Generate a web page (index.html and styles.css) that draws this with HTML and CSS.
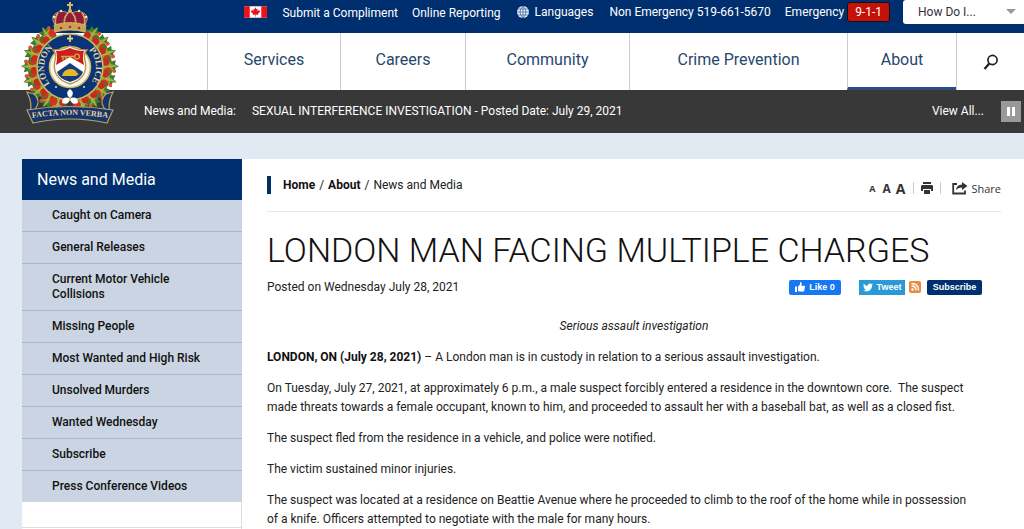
FILE: index.html
```html
<!DOCTYPE html>
<html lang="en">
<head>
<meta charset="utf-8">
<title>London Man Facing Multiple Charges</title>
<link rel="stylesheet" href="styles.css">
</head>
<body>
<header class="site-header">
  <a class="crest" href="#" aria-label="London Police home">
    <svg viewBox="0 0 110 130" width="110" height="130">
      <defs>
        <g id="leaf">
          <path d="M0-49 2-45 6-46 5-42 10-40 7-36 7-31H-7V-36L-10-39-5-42-6-46-2-45Z" fill="#3d7a34"/>
          <path d="M0-48 1-42 5-44 3-39 7-38 2-34H-2L-4-38-2-42Z" fill="#93a83c"/>
          <path d="M0-47V-33M0-39 5-42M0-37-5-41" stroke="#d2b350" stroke-width=".6" fill="none"/>
          <circle cx="5" cy="-38" r="3.800" fill="#d8321e"/>
          <circle cx="-4" cy="-36" r="3.400" fill="#c92a1a"/>
          <circle cx="5" cy="-44" r="1.800" fill="#e5502a"/>
        </g>
        <path id="arc-left" d="M38.500 87.500A26 26 0 0 1 42 45"/>
        <path id="arc-right" d="M68 45A26 26 0 0 1 71.500 87.500"/>
        <path id="arc-motto" d="M17 118Q55 112 93 118"/>
      </defs>
      <g transform="translate(55 67)">
        <use href="#leaf" transform="rotate(-146)"/><use href="#leaf" transform="rotate(-127)"/>
        <use href="#leaf" transform="rotate(-108)"/><use href="#leaf" transform="rotate(-89)"/>
        <use href="#leaf" transform="rotate(-70)"/><use href="#leaf" transform="rotate(-52)"/>
        <use href="#leaf" transform="rotate(-35)"/><use href="#leaf" transform="rotate(35)"/>
        <use href="#leaf" transform="rotate(52)"/><use href="#leaf" transform="rotate(70)"/>
        <use href="#leaf" transform="rotate(89)"/><use href="#leaf" transform="rotate(108)"/>
        <use href="#leaf" transform="rotate(127)"/><use href="#leaf" transform="rotate(146)"/>
        <use href="#leaf" transform="rotate(162)"/><use href="#leaf" transform="rotate(-162)"/>
      </g>
      <circle cx="55" cy="67" r="33" fill="#0b3478" stroke="#d3b660" stroke-width="1.600"/>
      <circle cx="55" cy="67" r="20.500" fill="#f7f5ef" stroke="#d3b660" stroke-width="1.600"/>
      <path d="M55 35v7M52 38.500h6" stroke="#e4cd7e" stroke-width="1.800"/>
      <circle cx="41" cy="87" r="1" fill="#f0e0a0"/><circle cx="69" cy="87" r="1" fill="#f0e0a0"/>
      <g class="crest-name">
        <text><textPath href="#arc-left" startOffset="50%">LONDON</textPath></text>
        <text><textPath href="#arc-right" startOffset="50%">POLICE</textPath></text>
      </g>
      <path d="M38 50Q48 50 55 46Q62 50 72 50Q68 54 70 60Q74 78 55 84Q36 78 40 60Q42 54 38 50Z" fill="#fff" stroke="#b99545" stroke-width="1.400"/>
      <path d="M41 51Q49 51 55 48Q61 51 69 51Q67 57 69 65L55 57 41 65Q43 57 41 51Z" fill="#c8201d"/>
      <path d="M46 56.500H60M48 57v3M51 57v2" stroke="#d9a33d" stroke-width="1.400"/><circle cx="62" cy="56.500" r="2.400" fill="none" stroke="#d9a33d" stroke-width="1.300"/>
      <path d="M42 72 55 63 68 72Q66 79 55 82Q44 79 42 72Z" fill="#173c7e"/>
      <path d="M47 76Q48 70 55 69Q61 69 62 73L64 74 61 76Z" fill="#e6ba27"/>
      <g stroke="#e0c878" stroke-width=".7">
        <path d="M41 26Q35 18 40 14Q46 9 53 13L55 9 57 13Q64 9 70 14Q75 18 69 26Z" fill="#8f1d36"/>
        <path d="M41 26Q39 18 43 13M69 26Q71 18 67 13M50 26Q48 18 53 13M60 26Q62 18 57 13" fill="none" stroke="#e7d18b" stroke-width="1.800" stroke-dasharray="1.5 .6"/>
        <path d="M39 25Q55 20 71 25L70 32Q55 28 40 32Z" fill="#c9a351"/>
        <path d="M55 2v8M52 5h6" stroke="#d8b95b" stroke-width="2"/>
      </g>
      <circle cx="55" cy="11" r="2" fill="#d8b95b"/>
      <g fill="#bd2632"><circle cx="46" cy="28" r="1.300"/><circle cx="55" cy="27" r="1.300"/><circle cx="64" cy="28" r="1.300"/></g>
      <g fill="#f2e5bd"><circle cx="39" cy="17" r="1.300"/><circle cx="46" cy="11" r="1.200"/><circle cx="64" cy="11" r="1.200"/><circle cx="71" cy="17" r="1.300"/></g>
      <g stroke="#bda65e" stroke-width="1.200" fill="#15356f">
        <path d="M12 92 19 94Q26 100 21 108L15 113Q18 104 12 92Z"/>
        <path d="M98 92 91 94Q84 100 89 108L95 113Q92 104 98 92Z"/>
        <path d="M12 110Q55 103 98 110L92 123Q55 115 18 123Z"/>
      </g>
      <path d="M55 98Q49 93 55 89Q61 93 55 98Q63 96 63 103Q56 106 55 98Q54 106 47 103Q47 96 55 98Z" fill="#fff"/>
      <circle cx="55" cy="98" r="1.200" fill="#d9bd4c"/>
      <text class="crest-motto"><textPath href="#arc-motto" startOffset="50%">FACTA NON VERBA</textPath></text>
    </svg>
  </a>
  <div class="topbar">
    <svg class="flag" viewBox="0 0 24 12" width="23" height="12" role="img" aria-label="Canada">
      <path fill="#fff" d="M0 0h24v12H0z"/><path fill="#e8131d" d="M0 0h6v12H0zM18 0h6v12h-6z"/>
      <path fill="#e8131d" d="M12 1 13 3 14.200 2.500 13.900 5 15.500 4 16.500 5 17 5.500 14.500 8 14.700 9 12.300 8.700V11H11.700V8.700L9.300 9 9.500 8 7 5.500 7.500 5 8.500 4 10.100 5 9.800 2.500 11 3Z"/>
    </svg>
    <a class="compliment" href="#">Submit a Compliment</a>
    <a class="reporting" href="#">Online Reporting</a>
    <a class="languages" href="#">
      <svg viewBox="0 0 12 12" width="12" height="12"><circle cx="6" cy="6" r="6" fill="#e8eef8"/><path d="M6 0v12M0 6h12M1 3h10M1 9h10M6 0Q0 6 6 12M6 0q6 6 0 12" stroke="#37609c" stroke-width=".7" fill="none"/></svg>
      Languages</a>
    <span class="non-emergency">Non Emergency 519-661-5670</span>
    <span class="emergency">Emergency <a class="dial" href="#">9-1-1</a></span>
    <div class="how">
      <select aria-label="How Do I"><option>How Do I...</option></select>
    </div>
  </div>
  <nav class="main-nav" aria-label="Main">
    <a href="#">Services</a>
    <a href="#">Careers</a>
    <a href="#">Community</a>
    <a href="#">Crime Prevention</a>
    <a class="current" href="#">About</a>
    <button class="search" type="button" aria-label="Search">
      <svg viewBox="0 0 16 16" width="16" height="16" fill="none" stroke="#222"><circle cx="9.500" cy="6" r="4.600" stroke-width="1.700"/><path d="M6.300 9.500 1.500 15" stroke-width="2.300"/></svg>
    </button>
  </nav>
  <div class="ticker">
    <span class="ticker-label">News and Media:</span>
    <a href="#">SEXUAL INTERFERENCE INVESTIGATION - Posted Date: July 29, 2021</a>
    <a class="view-all" href="#">View All...</a>
    <button class="pause" type="button" aria-label="Pause"><span></span><span></span></button>
  </div>
</header>
<div class="page">
  <aside class="sidebar">
    <h2>News and Media</h2>
    <ul>
      <li><a href="#">Caught on Camera</a></li>
      <li><a href="#">General Releases</a></li>
      <li><a href="#">Current Motor Vehicle Collisions</a></li>
      <li><a href="#">Missing People</a></li>
      <li><a href="#">Most Wanted and High Risk</a></li>
      <li><a href="#">Unsolved Murders</a></li>
      <li><a href="#">Wanted Wednesday</a></li>
      <li><a href="#">Subscribe</a></li>
      <li><a href="#">Press Conference Videos</a></li>
    </ul>
    <div class="side-box"></div>
  </aside>
  <main class="content">
    <div class="tools">
      <nav class="breadcrumb" aria-label="Breadcrumb"><a href="#">Home</a><span>/</span><a href="#">About</a><span>/</span>News and Media</nav>
      <div class="actions">
        <button class="size-s" type="button">A</button>
        <button class="size-m" type="button">A</button>
        <button class="size-l" type="button">A</button>
        <button class="print" type="button" aria-label="Print">
          <svg viewBox="0 0 12 12" width="12" height="12" fill="#333"><path d="M2 0h8v2H2zM1 3h10l1 1v5h-2V7H2v2H0V4zM3 8h6v4H3z"/></svg>
        </button>
        <button class="share" type="button">
          <svg viewBox="0 0 16 13" width="16" height="13"><path d="M5 2H1.200V11.500H13V8.500" fill="none" stroke="#333" stroke-width="1.800"/><path d="M10 0 15.500 4 10 8V5.500Q6 5.300 4 8Q4.500 3 10 2.600Z" fill="#333"/></svg>
          Share</button>
      </div>
    </div>
    <h1>LONDON MAN FACING MULTIPLE CHARGES</h1>
    <div class="meta">
      <span>Posted on Wednesday July 28, 2021</span>
      <div class="social">
        <button class="like" type="button"><svg viewBox="0 0 10 10" width="10" height="10" fill="#fff"><path d="M0 4.500h2V10H0zM3 4.500 5 2.500V0Q7 0 6.700 2.200L6.300 3.800H9.500L10 5 9 9.500H4L3 9z"/></svg>Like 0</button>
        <button class="tweet" type="button"><svg viewBox="0 0 24 20" width="10" height="9" fill="#fff"><path d="M24 2.500 21.500 5C22 15 12 23 0 17.500 3 17.700 5.500 17 7.200 15.300 5 15 3.300 13.700 2.700 12H5C2.500 11 1 9 1 7L3.200 7.600C1 6 .4 3 1.700.9 4.500 4 7.500 5.800 11.700 6 11 1.500 15.800-1.500 19.900 1.600L23 .5 21 3.200Z"/></svg>Tweet</button>
        <a class="rss" href="#" aria-label="RSS"><svg viewBox="0 0 12 12" width="12" height="12"><rect width="12" height="12" rx="2" fill="#e88b42"/><circle cx="3.500" cy="8.500" r="1.200" fill="#fff"/><path d="M2.500 5Q7 5 7 9.500M2.500 2.500Q9.500 2.500 9.500 9.500" fill="none" stroke="#fff" stroke-width="1.300"/></svg></a>
        <button class="subscribe" type="button">Subscribe</button>
      </div>
    </div>
    <article>
      <p class="subtitle">Serious assault investigation</p>
      <div class="story">
        <p><strong>LONDON, ON (July 28, 2021)</strong> – A London man is in custody in relation to a serious assault investigation.</p>
        <p>On Tuesday, July 27, 2021, at approximately 6 p.m., a male suspect forcibly entered a residence in the downtown core.&nbsp; The suspect made threats towards a female occupant, known to him, and proceeded to assault her with a baseball bat, as well as a closed fist.</p>
        <p>The suspect fled from the residence in a vehicle, and police were notified.</p>
        <p>The victim sustained minor injuries.</p>
        <p>The suspect was located at a residence on Beattie Avenue where he proceeded to climb to the roof of the home while in possession of a knife. Officers attempted to negotiate with the male for many hours.</p>
      </div>
    </article>
  </main>
</div>
</body>
</html>
```

FILE: styles.css
```css
* { box-sizing: border-box; }
body {
  margin: 0;
  background: #e1e9f3;
  color: #222;
  font: 12px/19px Roboto, "Liberation Sans", sans-serif;
}
a { color: inherit; text-decoration: none; }
button { border: 0; padding: 0; background: none; color: inherit; font: inherit; cursor: pointer; }
svg { display: block; }

.site-header { position: relative; }
.crest { position: absolute; left: 15px; top: 0; z-index: 1; }
.crest-name { fill: #e9d69a; font: bold 9px "Liberation Serif", serif; text-anchor: middle; }
.crest-motto { fill: #e9d69a; font: bold 8px "Liberation Serif", serif; text-anchor: middle; }

.topbar {
  display: flex;
  justify-content: flex-end;
  align-items: flex-start;
  height: 33px;
  background: #002f6f;
  color: #fff;
  line-height: 24px;
  white-space: nowrap;
}
.flag { margin: 6px 15px 0 0; }
.compliment { margin-right: 14px; line-height: 26px; }
.reporting { margin-right: 16px; line-height: 26px; }
.languages { display: flex; align-items: center; gap: 6px; margin-right: 16px; }
.non-emergency { margin-right: 14px; }
.dial {
  display: inline-block;
  padding: 0 7px;
  border: 1px solid #111;
  border-radius: 3px;
  background: #c4120a;
  line-height: 18px;
}
.how { position: relative; width: 121px; margin-left: 13px; }
.how::after {
  content: "";
  position: absolute;
  right: 8px;
  top: 9px;
  border: 5px solid transparent;
  border-top-color: #999;
  pointer-events: none;
}
.how select {
  display: block;
  width: 100%;
  height: 24px;
  padding: 0 15px;
  border: 0;
  border-radius: 3px 0 0 3px;
  appearance: none;
  background: #fff;
  color: #333;
  font: inherit;
}

.main-nav {
  display: grid;
  grid-template-columns: 133fr 125fr 164fr 218fr 109fr 68px;
  height: 57px;
  padding-left: 207px;
  background: #fff;
}
.main-nav > * {
  display: flex;
  justify-content: center;
  border-left: 1px solid #ccc;
  color: #26476f;
  font-size: 16px;
  line-height: 54px;
}
.main-nav .current { border-bottom: 3px solid #2c4a8c; }
.main-nav .search { align-items: center; }

.ticker {
  display: flex;
  align-items: center;
  height: 43px;
  padding: 0 3px 0 144px;
  background: #383838;
  color: #fff;
}
.ticker-label { margin-right: 16px; }
.view-all { margin: 0 17px 0 auto; }
.pause { display: flex; justify-content: center; align-items: center; gap: 2px; width: 20px; height: 21px; background: #999; }
.pause span { width: 3px; height: 9px; background: #fff; }

.page { display: grid; grid-template-columns: 220px 1fr; margin: 26px 0 0 22px; background: #fff; }
.sidebar { border-right: 1px solid #ddd; }
.sidebar h2 { margin: 0 -1px 0 0; padding: 0 15px; background: #002f6f; color: #fff; font-size: 16px; font-weight: 400; line-height: 41px; }
.sidebar ul { margin: 0 -1px 0 0; padding: 0; list-style: none; background: #cad4e2; }
.sidebar li a { display: block; padding: 8px 50px 8px 30px; color: #111; font-weight: 500; line-height: 15px; }
.sidebar li:nth-child(n+4) a { padding-right: 20px; }
.sidebar li + li { border-top: 1px solid #a5b8d3; }
.side-box { height: 26px; border-bottom: 1px solid #ddd; }

.content { padding: 0 23px 0 25px; }
.tools { display: flex; justify-content: space-between; align-items: center; height: 53px; border-bottom: 1px solid #e6e6e6; }
.breadcrumb { padding-left: 12px; border-left: 4px solid #00305f; line-height: 18px; }
.breadcrumb a { color: #111; font-weight: 700; }
.breadcrumb span { margin: 0 4px; }
.actions { display: flex; align-items: center; padding-top: 6px; color: #333; font-family: "Open Sans", sans-serif; font-weight: 700; }
.size-s { margin-right: 7px; font-size: 9px; }
.size-m { margin-right: 5px; font-size: 12px; }
.size-l { font-size: 14px; }
.print { margin: 0 8px; padding: 0 7px; border: solid #ccc; border-width: 0 1px; }
.share { display: flex; align-items: center; gap: 3px; margin-left: 3px; font-size: 11px; font-weight: 400; }

h1 { margin: 17px 0 8px; color: #111; font-size: 34px; font-weight: 300; line-height: 42px; }
.meta { display: flex; justify-content: space-between; align-items: center; padding-right: 19px; line-height: 16px; }
.social { display: flex; align-items: center; color: #fff; font: bold 9px/16px "Liberation Sans", sans-serif; }
.social button { display: flex; justify-content: center; align-items: center; gap: 4px; height: 15px; }
.like { width: 52px; margin-right: 18px; border-radius: 2px; background: #1877f2; }
.tweet { width: 46px; background: #2a9ad6; }
.rss { margin: 0 6px 0 4px; }
.subscribe { width: 55px; border-radius: 2px; background: #002f6f; }

article { padding-top: 22px; }
article p { margin: 0 0 12px; }
article strong { color: #111; }
.subtitle { text-align: center; font-style: italic; }
.story { padding-right: 27px; }
```
